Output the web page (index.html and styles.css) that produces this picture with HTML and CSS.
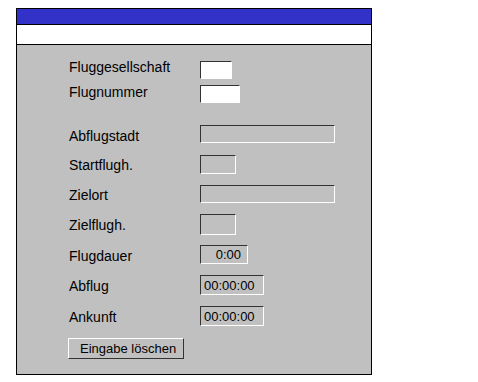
FILE: index.html
```html
<!DOCTYPE html>
<html lang="de">
<head>
<meta charset="utf-8">
<title>Flugdaten</title>
<link rel="stylesheet" href="styles.css">
</head>
<body>
<div class="window">
  <div class="titlebar"></div>
  <div class="menubar"></div>
  <div class="panel">
    <div class="form">
      <div class="label up2">Fluggesellschaft</div>
      <div class="field white w32"></div>

      <div class="label up1">Flugnummer</div>
      <div class="field white w40"></div>

      <div class="label">Abflugstadt</div>
      <div class="field w135"></div>

      <div class="label dn1">Startflugh.</div>
      <div class="field w36 h19"></div>

      <div class="label dn1">Zielort</div>
      <div class="field w135"></div>

      <div class="label">Zielflugh.</div>
      <div class="field w36 h21"></div>

      <div class="label">Flugdauer</div>
      <div class="field w48 h19 right">0:00</div>

      <div class="label">Abflug</div>
      <div class="field w64 h20">00:00:00</div>

      <div class="label">Ankunft</div>
      <div class="field w64 h20">00:00:00</div>

      <button class="btn" type="button">Eingabe löschen</button>
    </div>
  </div>
</div>
</body>
</html>
```
FILE: styles.css
```css
html, body {
  margin: 0;
  padding: 0;
  background: #ffffff;
}

body {
  font-family: "Liberation Sans", Arial, sans-serif;
  color: #000000;
}

.window {
  box-sizing: border-box;
  width: 356px;
  height: 367px;
  margin: 8px 0 0 16px;
  border: 1px solid #000000;
  display: flex;
  flex-direction: column;
}

.titlebar {
  height: 15px;
  background: #3232c8;
  border-bottom: 1px solid #000000;
}

.menubar {
  height: 19px;
  background: #ffffff;
  border-bottom: 1px solid #000000;
}

.panel {
  flex: 1;
  background: #c0c0c0;
}

.form {
  display: grid;
  grid-template-columns: 131px auto;
  grid-template-rows: 24px 40px 30px 30px 29px 31px 30px 31px 32px 21px;
  padding: 16px 0 0 52px;
}

.label {
  align-self: start;
  font-size: 14px;
  line-height: 16px;
  margin-top: 3px;
  white-space: nowrap;
}

.label.up2 { margin-top: -2px; }
.label.up1 { margin-top: -1px; }
.label.dn1 { margin-top: 2px; }

.field {
  align-self: start;
  justify-self: start;
  box-sizing: border-box;
  height: 18px;
  border-top: 1px solid #333333;
  border-left: 1px solid #333333;
  border-right: 1px solid #ffffff;
  border-bottom: 1px solid #ffffff;
  background: #c0c0c0;
  font-size: 13px;
  line-height: 18px;
  padding: 0 0 0 3px;
  white-space: nowrap;
}

.field.white { background: #ffffff; }
.field.right { text-align: right; padding: 0 6px 0 0; }

.w32 { width: 32px; }
.w36 { width: 36px; }
.w40 { width: 40px; }
.w48 { width: 48px; }
.w64 { width: 64px; }
.w135 { width: 135px; }

.h19 { height: 19px; }
.h20 { height: 20px; padding-top: 2px; line-height: 16px; }
.h21 { height: 21px; }

.btn {
  grid-column: 1 / span 2;
  justify-self: start;
  align-self: start;
  box-sizing: border-box;
  width: 116px;
  height: 21px;
  margin: 0 0 0 -1px;
  padding: 0 0 0 11px;
  background: #c0c0c0;
  border-top: 1px solid #ffffff;
  border-left: 1px solid #ffffff;
  border-right: 1px solid #333333;
  border-bottom: 1px solid #333333;
  border-radius: 0;
  font-family: "Liberation Sans", Arial, sans-serif;
  font-size: 13px;
  line-height: 19px;
  color: #000000;
  text-align: left;
}
```
